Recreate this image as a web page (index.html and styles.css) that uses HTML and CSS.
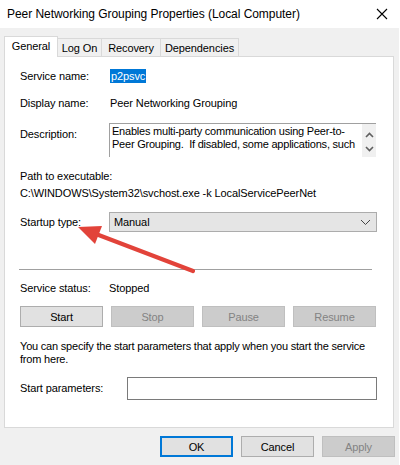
FILE: index.html
```html
<!DOCTYPE html>
<html>
<head>
<meta charset="utf-8">
<link rel="stylesheet" href="styles.css">
</head>
<body>
<div class="window">
  <div class="titlebar">
    <span class="title">Peer Networking Grouping Properties (Local Computer)</span>
    <svg class="close" width="12" height="12" viewBox="0 0 12 12"><path d="M1 1 L11 11 M11 1 L1 11" stroke="#000" stroke-width="1.1" fill="none"/></svg>
  </div>
  <div class="tabs">
    <div class="tab active t-general">General</div>
    <div class="tab t-logon">Log On</div>
    <div class="tab t-recovery">Recovery</div>
    <div class="tab t-deps">Dependencies</div>
  </div>
  <div class="panel">
    <div class="row r-name"><span class="label">Service name:</span><span class="value"><span class="selected">p2psvc</span></span></div>
    <div class="row r-display"><span class="label">Display name:</span><span class="value pad">Peer Networking Grouping</span></div>
    <div class="row r-desc">
      <span class="label">Description:</span>
      <div class="textbox">
        <div class="tb-text">Enables multi-party communication using Peer-to-<br>Peer Grouping.&nbsp; If disabled, some applications, such</div>
        <div class="tb-scroll">
          <svg width="9" height="6" viewBox="0 0 9 6"><path d="M1 5 L4.5 1.5 L8 5" stroke="#606060" stroke-width="1.6" fill="none"/></svg>
          <svg width="9" height="6" viewBox="0 0 9 6"><path d="M1 1 L4.5 4.5 L8 1" stroke="#606060" stroke-width="1.6" fill="none"/></svg>
        </div>
      </div>
    </div>
    <div class="path">
      <div>Path to executable:</div>
      <div>C:\WINDOWS\System32\svchost.exe -k LocalServicePeerNet</div>
    </div>
    <div class="row r-startup">
      <span class="label">Startup type:</span>
      <div class="select"><span>Manual</span>
        <svg width="11" height="7" viewBox="0 0 11 7"><path d="M1 1 L5.5 5.5 L10 1" stroke="#444" stroke-width="1" fill="none"/></svg>
      </div>
    </div>
    <div class="separator"></div>
    <div class="row r-status"><span class="label">Service status:</span><span class="value">Stopped</span></div>
    <div class="svc-buttons">
      <div class="btn">Start</div>
      <div class="btn disabled">Stop</div>
      <div class="btn disabled">Pause</div>
      <div class="btn disabled">Resume</div>
    </div>
    <div class="help">You can specify the start parameters that apply when you start the service<br>from here.</div>
    <div class="row r-params">
      <span class="label wide">Start parameters:</span>
      <div class="input"></div>
    </div>
  </div>
  <div class="actions">
    <div class="btn dlg focus">OK</div>
    <div class="btn dlg">Cancel</div>
    <div class="btn dlg disabled">Apply</div>
  </div>
  <svg class="arrow" width="400" height="465" viewBox="0 0 400 465">
    <line x1="193" y1="271" x2="96" y2="234" stroke="#e2433a" stroke-width="4.2" stroke-linecap="round"/>
    <polygon points="78,227 102,226 95,244" fill="#e2433a"/>
  </svg>
</div>
</body>
</html>
```
FILE: styles.css
```css
html, body {
  margin: 0;
  padding: 0;
}
body {
  background: #ffffff;
  font-family: "Liberation Sans", Arial, sans-serif;
  font-size: 11px;
  letter-spacing: -0.1px;
  color: #000;
  width: 400px;
  height: 465px;
  overflow: hidden;
}
.window {
  position: relative;
  width: 399px;
  height: 465px;
  background: #f0f0f0;
}
.titlebar {
  height: 28px;
  background: #fff;
  display: flex;
  align-items: center;
  justify-content: space-between;
  padding: 0 7px 1px 7px;
  box-sizing: border-box;
}
.title {
  font-size: 12px;
  letter-spacing: -0.05px;
}
.close {
  margin-right: 4px;
}
.tabs {
  display: flex;
  align-items: flex-end;
  height: 20px;
  margin-top: 8px;
  padding-left: 4px;
}
.tab {
  box-sizing: border-box;
  height: 18px;
  border: 1px solid #d9d9d9;
  border-bottom: none;
  background: #f0f0f0;
  display: flex;
  align-items: center;
  justify-content: center;
  margin-left: -1px;
  padding-top: 1px;
}
.tab.active {
  height: 21px;
  margin-bottom: -1px;
  margin-left: 0;
  background: #fff;
  position: relative;
  z-index: 1;
  padding-top: 0;
  padding-bottom: 2px;
}
.t-general { width: 54px; }
.t-logon { width: 45px; }
.t-recovery { width: 60px; }
.t-deps { width: 79px; }

.panel {
  box-sizing: border-box;
  margin-left: 4px;
  width: 390px;
  height: 372px;
  border: 1px solid #d9d9d9;
  background: #fff;
  padding: 9px 0 0 15px;
}
.row {
  display: flex;
  align-items: center;
}
.label {
  width: 89px;
  flex: none;
}
.label.wide {
  width: 107px;
}
.value.pad {
  padding-left: 1px;
}
.r-name { height: 20px; }
.selected {
  background: #0078d7;
  color: #fff;
  padding: 1px 1px 1px 1px;
  margin-left: 1px;
}
.r-display { height: 20px; margin-top: 7px; }
.r-desc {
  margin-top: 10px;
  height: 34px;
  align-items: flex-start;
}
.r-desc .label {
  padding-top: 4px;
  line-height: 15px;
}
.textbox {
  box-sizing: border-box;
  width: 267px;
  height: 34px;
  border-top: 1px solid #a0a0a0;
  border-left: 1px solid #a0a0a0;
  display: flex;
}
.tb-text {
  flex: 1;
  white-space: nowrap;
  overflow: hidden;
  line-height: 13px;
  letter-spacing: -0.22px;
  padding: 1px 0 0 2px;
}
.tb-scroll {
  width: 14px;
  flex: none;
  background: #f0f0f0;
  display: flex;
  flex-direction: column;
  align-items: center;
  justify-content: space-between;
  padding: 8px 0 5px 0;
  box-sizing: border-box;
}
.path {
  margin-top: 11px;
  line-height: 17px;
}
.r-startup {
  margin-top: 10px;
  height: 20px;
}
.select {
  box-sizing: border-box;
  width: 268px;
  height: 20px;
  border: 1px solid #acacac;
  background: #e5e5e5;
  display: flex;
  align-items: center;
  justify-content: space-between;
  padding: 0 5px 0 4px;
}
.separator {
  margin-top: 37px;
  width: 353px;
  margin-left: -1px;
  height: 1px;
  background: #a0a0a0;
}
.r-status {
  margin-top: 10px;
  height: 15px;
}
.svc-buttons {
  margin-top: 11px;
  display: flex;
  gap: 8px;
}
.btn {
  box-sizing: border-box;
  height: 21px;
  width: 83px;
  border: 1px solid #adadad;
  background: #e1e1e1;
  display: flex;
  align-items: center;
  justify-content: center;
}
.btn.disabled {
  background: #cccccc;
  border-color: #bfbfbf;
  color: #838383;
}
.help {
  margin-top: 13px;
  line-height: 13px;
  letter-spacing: -0.2px;
}
.r-params {
  margin-top: 11px;
  height: 22px;
}
.input {
  box-sizing: border-box;
  width: 250px;
  height: 23px;
  border: 1px solid #7a7a7a;
  background: #fff;
}
.actions {
  margin-top: 8px;
  display: flex;
  justify-content: flex-end;
  gap: 8px;
  padding-right: 4px;
}
.btn.dlg {
  width: 73px;
}
.btn.focus {
  border: 2px solid #0078d7;
}
.arrow {
  position: absolute;
  left: 0;
  top: 0;
  pointer-events: none;
}
```
